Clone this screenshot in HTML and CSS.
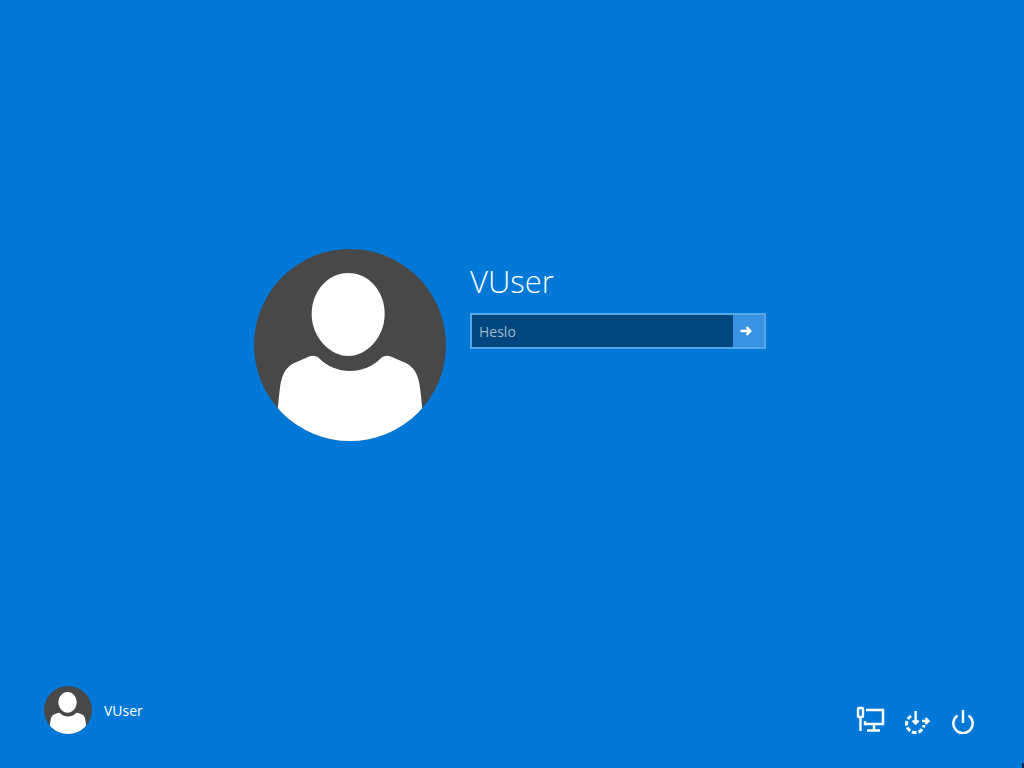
FILE: index.html
```html
<!DOCTYPE html>
<html lang="cs">
<head>
<meta charset="utf-8">
<title>VUser</title>
<link rel="stylesheet" href="styles.css">
</head>
<body>
<svg class="defs" width="0" height="0" aria-hidden="true">
  <symbol id="avatar" viewBox="27 27 576 576">
    <clipPath id="disc"><circle cx="315" cy="315" r="288"/></clipPath>
    <circle cx="315" cy="315" r="288" fill="#484848"/>
    <path fill="#fff" d="M310 99C370 99 419 152 419 222C419 292 365 348 310 348C255 348 200 292 200 222C200 152 250 99 310 99Z"/>
    <path fill="#fff" clip-path="url(#disc)" d="M86 620L104 450C109 410 118 385 146 370L191 350C204 345 214 347 224 356C246 378 280 393 315 393C350 393 384 378 406 356C416 347 426 345 439 350L484 370C512 385 521 410 526 450L544 620Z"/>
  </symbol>
</svg>
<main class="login">
  <svg class="avatar-large"><use href="#avatar"/></svg>
  <div class="panel">
    <h1 class="name">VUser</h1>
    <div class="field">
      <span class="placeholder">Heslo</span>
      <span class="submit">
        <svg class="arrow" viewBox="0 0 12 10"><path d="M0.5 5H10M6.5 1.2L10.4 5L6.5 8.8"/></svg>
      </span>
    </div>
  </div>
</main>
<footer class="footer">
  <div class="user">
    <svg class="avatar-small"><use href="#avatar"/></svg>
    <span class="user-name">VUser</span>
  </div>
  <div class="tools">
    <svg class="tool" viewBox="0 0 30 28"><path d="M2 3a1 1 0 0 1 1-1h3a1 1 0 0 1 1 1V10a1 1 0 0 1-1 1H3a1 1 0 0 1-1-1ZM4.5 11V25M10 4H27V18H9V15M18 18V24.5M11 24.5H24"/></svg>
    <svg class="tool" viewBox="0 0 30 28"><path class="dash" d="M9.2 10A8.8 8.8 0 1 0 22 19"/><path d="M13.6 5V17.5M10.5 14.5L13.6 17.5L16.7 14.5M20 15H26.5M23.5 12L26.5 15L23.5 18"/></svg>
    <svg class="tool" viewBox="0 0 30 28"><path d="M15 4V17M9.5 9.5A9.7 9.7 0 1 0 20.5 9.5"/></svg>
  </div>
</footer>
<span class="corner"></span>
</body>
</html>
```

FILE: styles.css
```css
html, body {
  margin: 0;
  height: 100%;
}
body {
  position: relative;
  width: 1024px;
  height: 768px;
  overflow: hidden;
  display: flex;
  flex-direction: column;
  background: #0078d7;
  color: #fff;
  font-family: "Open Sans", "Noto Sans", sans-serif;
}
.defs {
  position: absolute;
}
.login {
  flex: 1;
  display: flex;
  gap: 24px;
  padding: 249px 0 0 254px;
}
.avatar-large {
  width: 192px;
  height: 192px;
  flex: none;
}
.panel {
  padding-top: 12px;
}
.name {
  margin: 0 0 11px;
  font-size: 31px;
  line-height: 41px;
  font-weight: 300;
}
.field {
  box-sizing: border-box;
  width: 296px;
  height: 36px;
  display: flex;
  align-items: center;
  justify-content: space-between;
  border: 2px solid #5aa7e6;
  background: #00467f;
}
.placeholder {
  padding-left: 7px;
  font-size: 14px;
  color: #a0b8cc;
}
.submit {
  box-sizing: border-box;
  width: 31px;
  height: 100%;
  padding-right: 5px;
  display: flex;
  align-items: center;
  justify-content: center;
  background: #3a92e3;
}
.arrow {
  width: 12px;
  height: 10px;
  fill: none;
  stroke: #fff;
  stroke-width: 2.4;
}
.footer {
  display: flex;
  justify-content: space-between;
  align-items: center;
  padding: 0 46px 34px 44px;
}
.user {
  display: flex;
  align-items: center;
  gap: 12px;
}
.avatar-small {
  width: 48px;
  height: 48px;
}
.user-name {
  margin-top: 1px;
  font-size: 14px;
}
.tools {
  display: flex;
  gap: 16px;
  padding-top: 20px;
}
.tool {
  width: 30px;
  height: 28px;
  fill: none;
  stroke: #fff;
  stroke-width: 2.4;
}
.dash {
  stroke-width: 3;
  stroke-dasharray: 4.6 2;
}
.corner {
  position: absolute;
  right: 0;
  bottom: 0;
  width: 2px;
  height: 5px;
  background: #0c2a4a;
}
```
